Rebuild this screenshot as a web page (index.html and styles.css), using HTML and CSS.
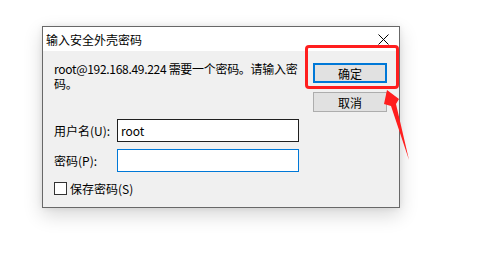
FILE: index.html
```html
<!DOCTYPE html>
<html lang="zh-CN">
<head>
<meta charset="utf-8">
<title>输入安全外壳密码</title>
<link rel="stylesheet" href="styles.css">
</head>
<body>
<div class="shot">
  <div class="dialog">
    <div class="titlebar">
      <span class="title">输入安全外壳密码</span>
      <svg class="close" width="11" height="11" viewBox="0 0 11 11"><path d="M0.5 0.5 L10.5 10.5 M10.5 0.5 L0.5 10.5" stroke="#000" stroke-width="1" fill="none"/></svg>
    </div>
    <div class="body">
      <div class="main">
        <p class="msg">root@192.168.49.224 需要一个密码。请输入密码。</p>
        <div class="field">
          <span class="label">用户名(U):</span>
          <div class="input user">root</div>
        </div>
        <div class="field">
          <span class="label">密码(P):</span>
          <div class="input focus"></div>
        </div>
        <div class="check">
          <span class="box"></span>
          <span>保存密码(S)</span>
        </div>
      </div>
      <div class="buttons">
        <div class="btn default">确定</div>
        <div class="btn">取消</div>
      </div>
    </div>
  </div>
  <div class="highlight"></div>
  <svg class="arrow" width="40" height="80" viewBox="376 86 40 80">
    <polygon points="387,90 399,99 396,104 409,160 391,106 384,104" fill="#ff1e1e"/>
  </svg>
</div>
</body>
</html>
```

FILE: styles.css
```css
html, body {
  margin: 0;
  padding: 0;
  background: #ffffff;
}

body {
  font-family: "Noto Sans CJK SC", "Liberation Sans", sans-serif;
  font-size: 12px;
  color: #000;
}

.shot {
  position: relative;
  width: 420px;
  height: 240px;
  overflow: hidden;
  padding: 26px 0 0 42px;
  box-sizing: border-box;
}

.dialog {
  width: 358px;
  height: 182px;
  box-sizing: border-box;
  border: 1px solid #686868;
  background: #f0f0f0;
  display: flex;
  flex-direction: column;
  box-shadow: 0 7px 18px rgba(0, 0, 0, 0.16), 0 0 6px rgba(0, 0, 0, 0.08);
}

.titlebar {
  height: 24px;
  background: #ffffff;
  display: flex;
  align-items: center;
  padding: 0 10px 0 3px;
  flex: none;
}

.title {
  line-height: 15px;
}

.close {
  margin-left: auto;
  display: block;
}

.body {
  flex: 1;
  display: flex;
  padding: 0 12px 0 11px;
}

.main {
  width: 246px;
  padding-top: 10px;
}

.msg {
  margin: 0;
  width: 250px;
  line-height: 15px;
  letter-spacing: -0.3px;
}

.field {
  display: flex;
  align-items: center;
  line-height: 15px;
  margin-top: 7px;
}

.msg + .field {
  margin-top: 28px;
}

.label {
  width: 63px;
  flex: none;
}

.input {
  width: 182px;
  height: 23px;
  box-sizing: border-box;
  border: 1px solid #1f1f1f;
  background: #fff;
  padding: 0 3px;
  display: flex;
  align-items: center;
}

.input.focus {
  border-color: #0078d7;
}

.check {
  display: flex;
  align-items: center;
  gap: 3px;
  margin-top: 9px;
  line-height: 15px;
}

.box {
  width: 13px;
  height: 13px;
  box-sizing: border-box;
  border: 1px solid #333;
  background: #fff;
}

.buttons {
  margin-left: 13px;
  padding-top: 12px;
  display: flex;
  flex-direction: column;
  gap: 9px;
}

.btn {
  width: 74px;
  height: 20px;
  box-sizing: border-box;
  border: 1px solid #adadad;
  background: #e1e1e1;
  display: flex;
  align-items: center;
  justify-content: center;
  line-height: 15px;
}

.btn.default {
  border: 2px solid #0078d7;
}

.highlight {
  position: absolute;
  left: 305px;
  top: 45px;
  width: 94px;
  height: 44px;
  box-sizing: border-box;
  border: 3px solid #ff1e1e;
  border-radius: 4px;
}

.arrow {
  position: absolute;
  left: 376px;
  top: 86px;
}
```
